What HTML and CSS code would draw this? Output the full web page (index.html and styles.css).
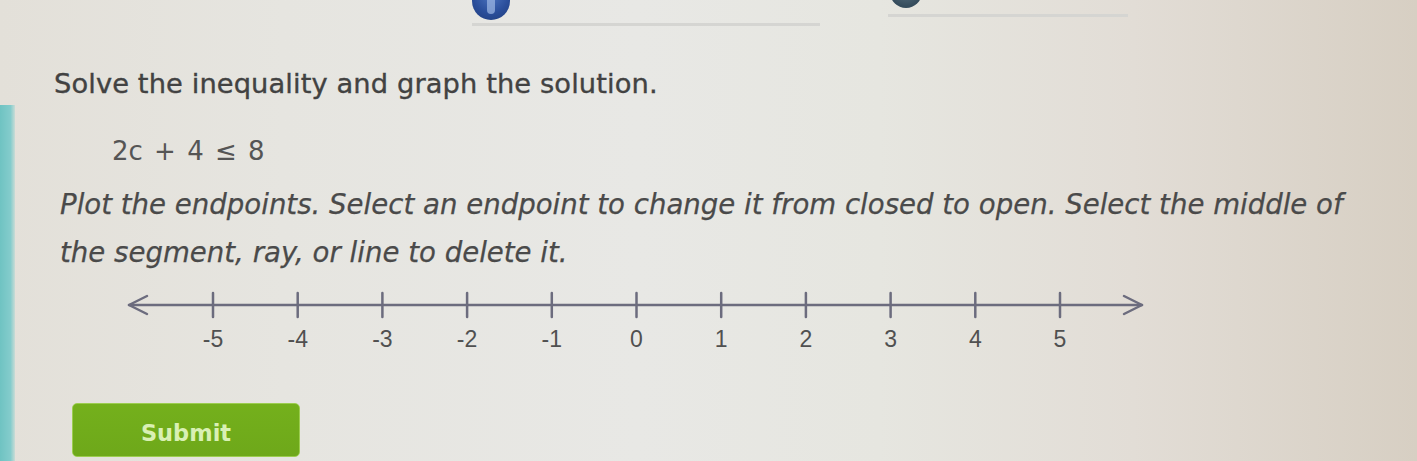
FILE: index.html
```html
<!DOCTYPE html>
<html lang="en">
<head>
<meta charset="utf-8">
<title>Solve the inequality</title>
<link rel="stylesheet" href="styles.css">
</head>
<body>
<div class="screen">
  <aside class="edge"><div class="edge-bar"></div></aside>
  <main class="content">
    <div class="progress">
      <div class="step step-one">
        <span class="dot dot-one"><span class="dot-shine"></span></span>
        <span class="rule rule-one"></span>
      </div>
      <div class="step step-two">
        <span class="dot dot-two"></span>
        <span class="rule rule-two"></span>
      </div>
    </div>
    <h1 class="title">Solve the inequality and graph the solution.</h1>
    <p class="equation">2c + 4 &le; 8</p>
    <p class="instructions">Plot the endpoints. Select an endpoint to change it from closed to open. Select the middle of the segment, ray, or line to delete it.</p>
    <svg class="numline" width="1040" height="72" viewBox="0 0 1040 72" aria-label="Number line from -5 to 5">
      <g class="axis">
        <line x1="4" y1="22" x2="1017" y2="22"/>
        <polyline points="22,13 4,22 22,31"/>
        <polyline points="999,13 1017,22 999,31"/>
        <line x1="88" y1="10" x2="88" y2="34"/>
        <line x1="172.7" y1="10" x2="172.7" y2="34"/>
        <line x1="257.4" y1="10" x2="257.4" y2="34"/>
        <line x1="342.1" y1="10" x2="342.1" y2="34"/>
        <line x1="426.8" y1="10" x2="426.8" y2="34"/>
        <line x1="511.5" y1="10" x2="511.5" y2="34"/>
        <line x1="596.2" y1="10" x2="596.2" y2="34"/>
        <line x1="680.9" y1="10" x2="680.9" y2="34"/>
        <line x1="765.6" y1="10" x2="765.6" y2="34"/>
        <line x1="850.3" y1="10" x2="850.3" y2="34"/>
        <line x1="935" y1="10" x2="935" y2="34"/>
      </g>
      <g class="labels">
        <text x="88" y="64">-5</text>
        <text x="172.7" y="64">-4</text>
        <text x="257.4" y="64">-3</text>
        <text x="342.1" y="64">-2</text>
        <text x="426.8" y="64">-1</text>
        <text x="511.5" y="64">0</text>
        <text x="596.2" y="64">1</text>
        <text x="680.9" y="64">2</text>
        <text x="765.6" y="64">3</text>
        <text x="850.3" y="64">4</text>
        <text x="935" y="64">5</text>
      </g>
    </svg>
    <div class="actions">
      <button class="submit" type="button">Submit</button>
    </div>
  </main>
</div>
</body>
</html>
```

FILE: styles.css
```css
html, body {
  margin: 0;
  padding: 0;
  height: 100%;
}

body {
  font-family: "DejaVu Sans", Verdana, sans-serif;
  color: #474747;
  background: linear-gradient(90deg, #e3e0d9 0%, #e6e5e0 20%, #e8e8e5 45%, #e6e6e0 62%, #e2ddd6 80%, #d7cfc3 100%);
  overflow: hidden;
}

.screen {
  display: flex;
  height: 461px;
}

.edge {
  width: 15px;
  flex: 0 0 15px;
  display: flex;
  flex-direction: column;
}

.edge-bar {
  margin-top: 105px;
  flex: 1;
  background: linear-gradient(90deg, #6fc3c2 0%, #84cccc 70%, #c9dcd6 100%);
}

.content {
  flex: 1;
  padding-left: 38px;
  display: flex;
  flex-direction: column;
  align-items: flex-start;
}

.progress {
  display: flex;
  align-items: flex-start;
  height: 30px;
  overflow: hidden;
  padding-left: 419px;
  gap: 68px;
}

.step {
  display: flex;
  flex-direction: column;
  align-items: flex-start;
}

.dot {
  display: block;
  border-radius: 50%;
  position: relative;
}

.dot-one {
  width: 38px;
  height: 38px;
  margin-top: -18px;
  background: radial-gradient(circle at 50% 35%, #4d74c0 0%, #2b4f9c 55%, #1f3b7a 100%);
}

.dot-shine {
  position: absolute;
  left: 15px;
  top: 12px;
  width: 8px;
  height: 20px;
  border-radius: 4px;
  background: #9fb9e6;
  opacity: 0.7;
}

.dot-two {
  width: 32px;
  height: 32px;
  margin-top: -24px;
  margin-left: 2px;
  background: radial-gradient(circle at 50% 40%, #5c7484 0%, #354c5c 70%);
}

.rule {
  display: block;
  height: 3px;
  background: #d5d5d2;
}

.rule-one {
  width: 348px;
  margin-top: 3px;
}

.rule-two {
  width: 240px;
  margin-top: 6px;
}

.title {
  margin: 38px 0 0 1px;
  font-size: 27.3px;
  font-weight: normal;
  line-height: 32px;
  color: #424242;
  letter-spacing: 0.1px;
  -webkit-text-stroke: 0.35px #424242;
}

.equation {
  margin: 36px 0 0 59px;
  font-size: 26px;
  line-height: 30px;
  color: #555;
  word-spacing: 3px;
}

.instructions {
  margin: 15px 0 0 7px;
  width: 1295px;
  font-size: 27.6px;
  font-style: italic;
  line-height: 48px;
  color: #4a4a4a;
  -webkit-text-stroke: 0.25px #4a4a4a;
}

.numline {
  display: block;
  margin: 6px 0 0 72px;
}

.axis line,
.axis polyline {
  stroke: #6c6c7e;
  stroke-width: 2.5;
  fill: none;
  stroke-linecap: round;
  stroke-linejoin: round;
}

.labels text {
  font-family: "Liberation Sans", Arial, sans-serif;
  font-size: 23px;
  fill: #505050;
  text-anchor: middle;
}

.actions {
  margin-top: 48px;
  margin-left: 19px;
}

.submit {
  width: 228px;
  height: 54px;
  border-radius: 5px;
  border: 1px solid #9ccd4f;
  background: linear-gradient(180deg, #74b01c 0%, #6ea81a 100%);
  color: #d9f0b4;
  font-family: "DejaVu Sans", Verdana, sans-serif;
  font-size: 22.5px;
  font-weight: bold;
  padding: 6px 0 0 0;
  text-align: center;
}
```
